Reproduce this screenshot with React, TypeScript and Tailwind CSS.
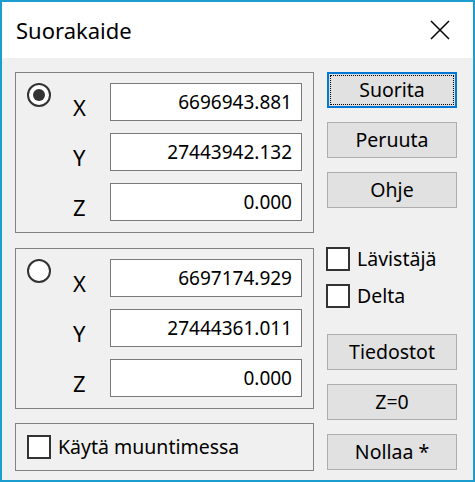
import type { ReactNode } from "react";

const font = { fontFamily: '"Noto Sans", "Open Sans", sans-serif' };

function Radio({ checked }: { checked?: boolean }) {
  return (
    <span className="flex h-[24px] w-[24px] shrink-0 items-center justify-center rounded-full border-2 border-[#333333] bg-white">
      {checked && <span className="h-[12px] w-[12px] rounded-full bg-[#333333]" />}
    </span>
  );
}

function Box() {
  return <span className="block h-[24px] w-[24px] shrink-0 border-2 border-[#333333] bg-white" />;
}

function Field({ label, value }: { label: string; value: string }) {
  return (
    <div className="flex items-start">
      <span className="mt-[13px] w-[37px] text-[22px] leading-[22px] text-black">{label}</span>
      <div className="flex h-[38px] w-[192px] items-center justify-end border border-[#7a7a7a] bg-white pr-[9px] text-[19px] text-black">
        {value}
      </div>
    </div>
  );
}

function PointGroup({ checked, x, y, z }: { checked?: boolean; x: string; y: string; z: string }) {
  return (
    <div className="flex h-[161px] border border-[#828282] pl-[11px] pt-[10px]">
      <Radio checked={checked} />
      <div className="ml-[22px] flex flex-col gap-[12px]">
        <Field label="X" value={x} />
        <Field label="Y" value={y} />
        <Field label="Z" value={z} />
      </div>
    </div>
  );
}

function Button({ children, focused }: { children: ReactNode; focused?: boolean }) {
  if (focused) {
    return (
      <div className="h-[36px] w-[130px] border-2 border-[#0078d7] bg-[#e1e1e1] p-px">
        <div className="flex h-full w-full items-center justify-center border border-dotted border-black text-[19.5px] text-black">
          {children}
        </div>
      </div>
    );
  }
  return (
    <div className="flex h-[36px] w-[130px] items-center justify-center border border-[#adadad] bg-[#e1e1e1] text-[19.5px] text-black">
      {children}
    </div>
  );
}

function Check({ label }: { label: string }) {
  return (
    <div className="flex h-[24px] items-center gap-[7px] text-[19.5px] leading-[24px] text-black">
      <Box />
      <span>{label}</span>
    </div>
  );
}

export default function App() {
  return (
    <div style={font} className="flex h-[482px] w-[475px] flex-col border-2 border-[#1c9dcf] bg-[#f0f0f0]">
      <div className="flex h-[56px] items-center justify-between bg-white pl-[14px] pr-[23px]">
        <span className="text-[22px] text-black">Suorakaide</span>
        <svg width="20" height="20" viewBox="0 0 20 20" aria-hidden>
          <path d="M1 1 L19 19 M19 1 L1 19" stroke="#000" strokeWidth="1.5" />
        </svg>
      </div>

      <div className="flex flex-1 gap-[13px] pl-[13px] pt-[14px]">
        <div className="flex w-[299px] flex-col">
          <PointGroup checked x="6696943.881" y="27443942.132" z="0.000" />
          <div className="mt-[15px]">
            <PointGroup x="6697174.929" y="27444361.011" z="0.000" />
          </div>
          <div className="mt-[14px] flex h-[48px] items-center border border-[#828282] pl-[11px]">
            <Check label="Käytä muuntimessa" />
          </div>
        </div>

        <div className="flex flex-col">
          <div className="flex flex-col gap-[14px]">
            <Button focused>Suorita</Button>
            <Button>Peruuta</Button>
            <Button>Ohje</Button>
          </div>
          <div className="ml-[-1px] mt-[39px] flex flex-col gap-[13px]">
            <Check label="Lävistäjä" />
            <Check label="Delta" />
          </div>
          <div className="mt-[26px] flex flex-col gap-[14px]">
            <Button>Tiedostot</Button>
            <Button>Z=0</Button>
            <Button>Nollaa *</Button>
          </div>
        </div>
      </div>
    </div>
  );
}
